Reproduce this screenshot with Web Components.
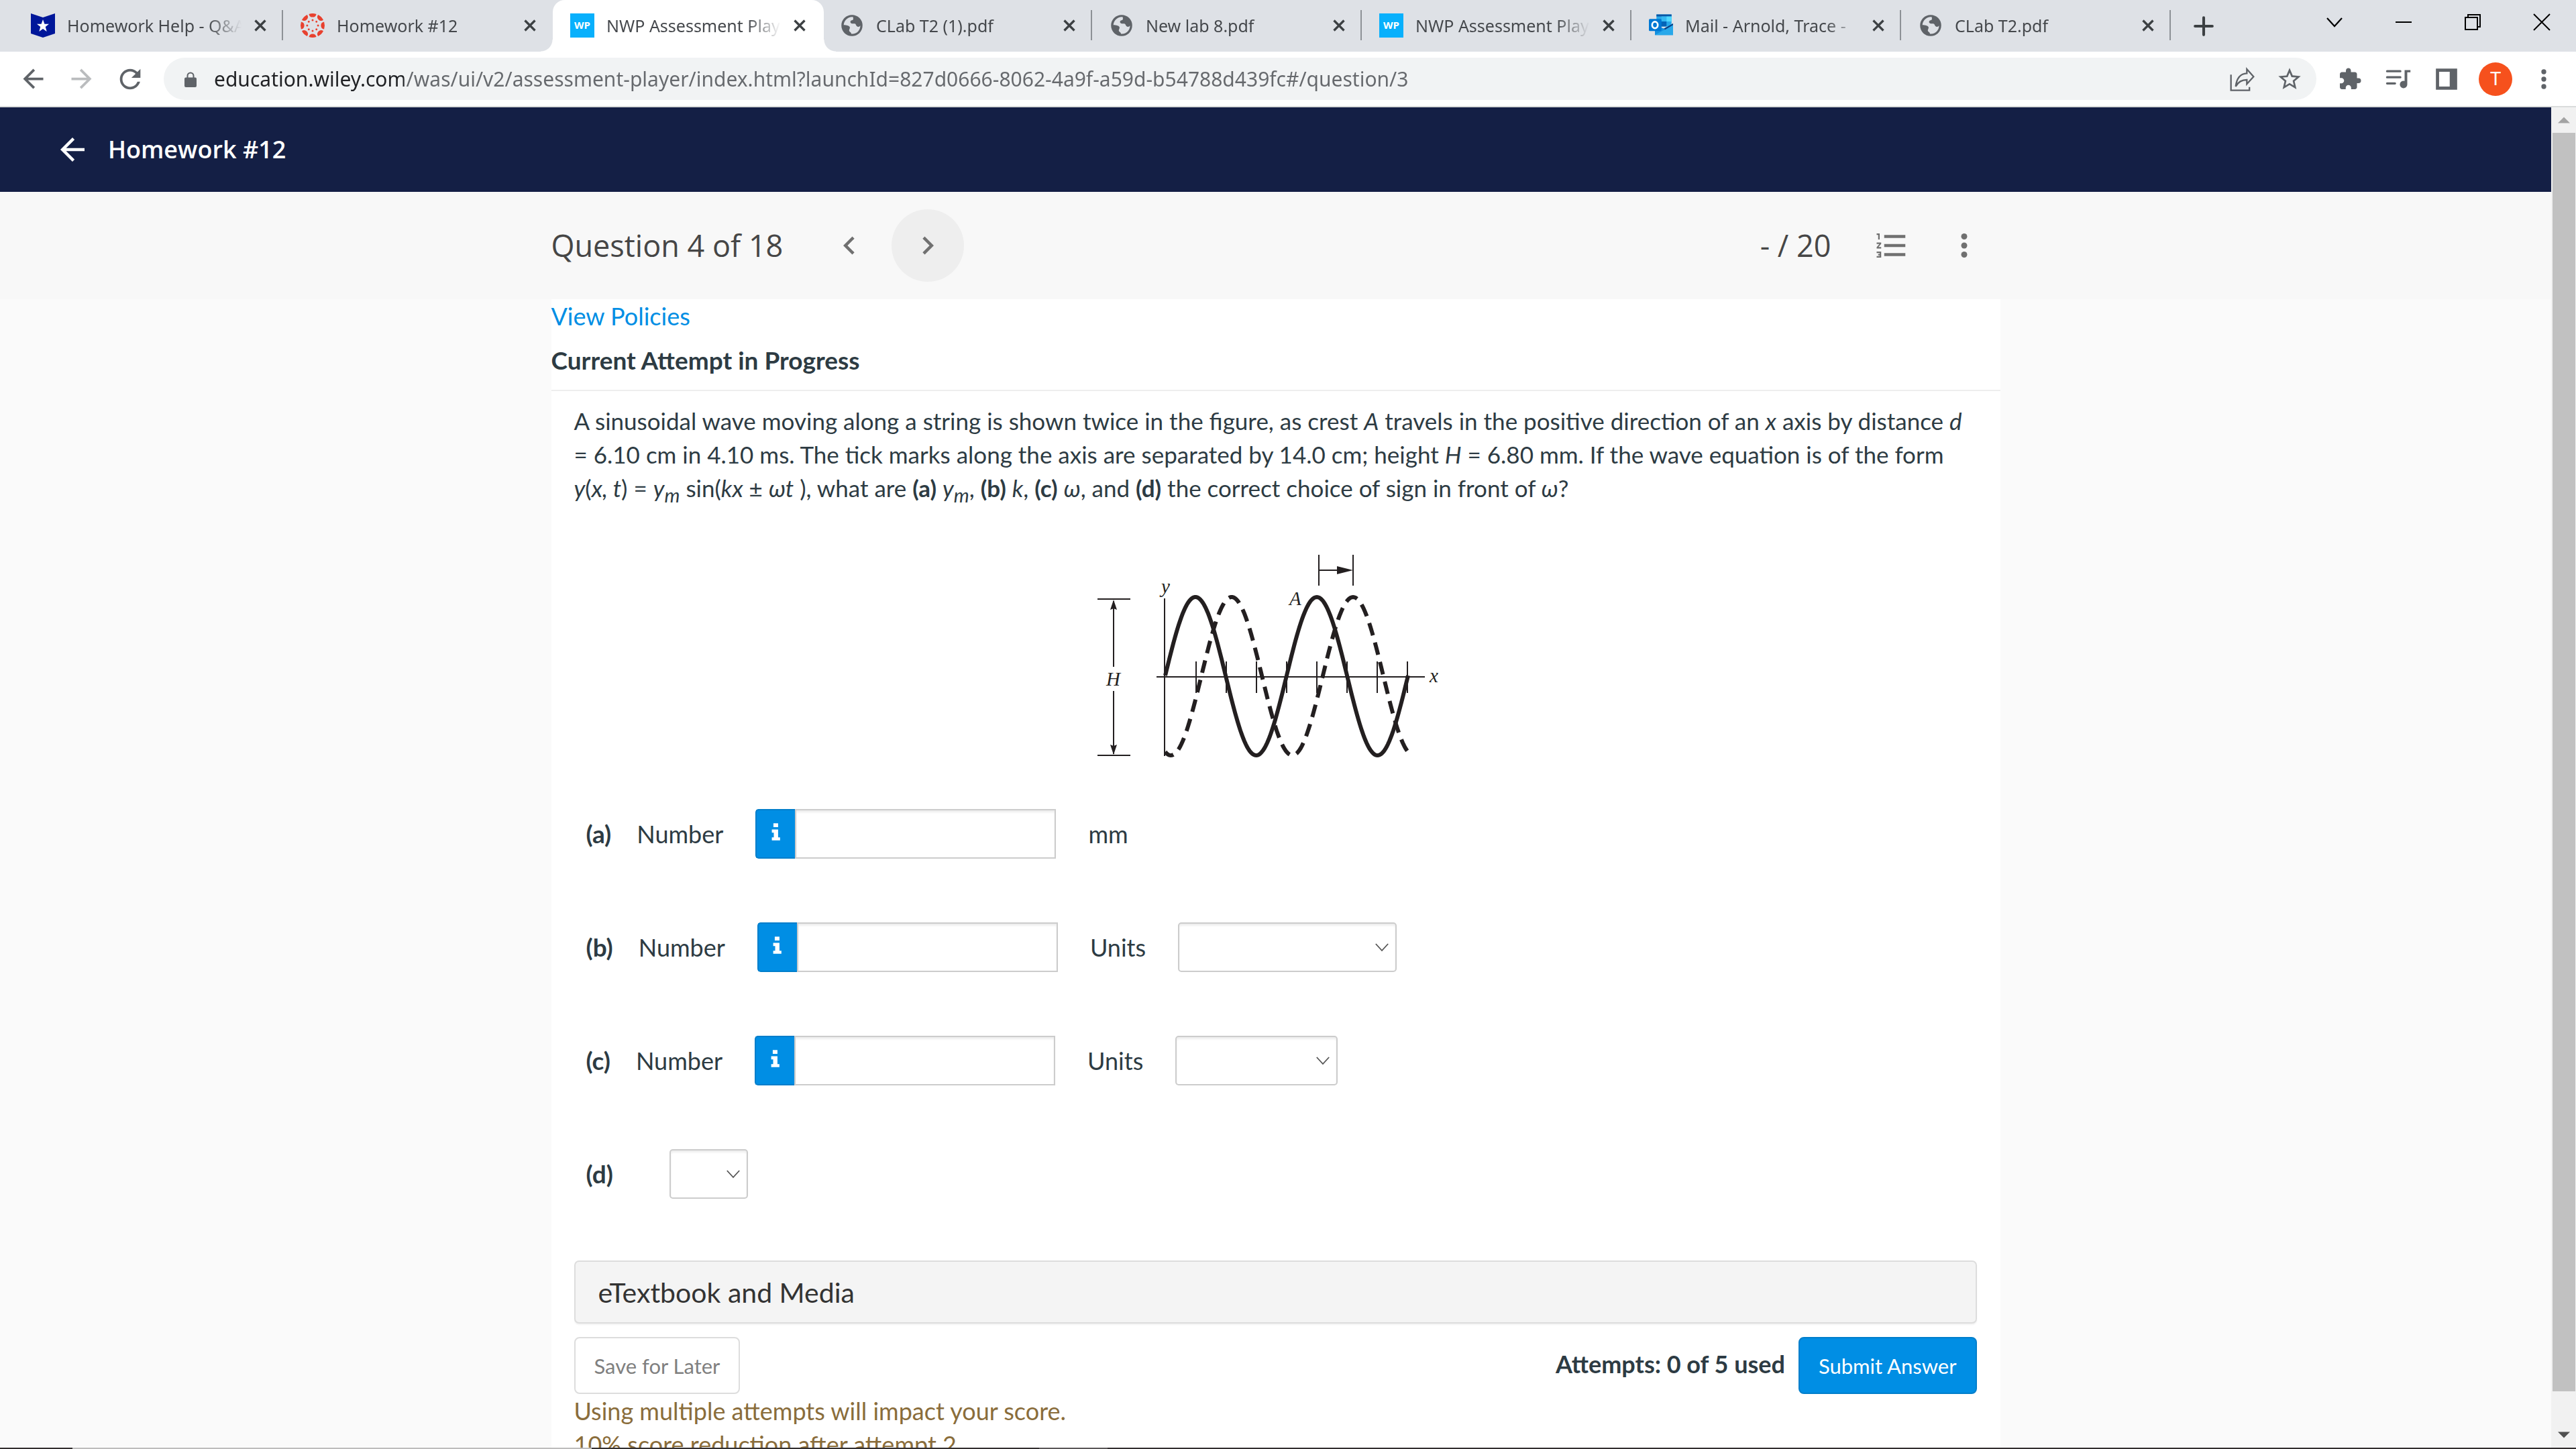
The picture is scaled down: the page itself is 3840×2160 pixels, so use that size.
<!DOCTYPE html>
<html lang="en">
<head>
  <meta charset="utf-8">
  <title>NWP Assessment Player</title>
  <style>
    * {
      box-sizing: border-box;
    }

    body {
      display: flex;
      flex-direction: column;
      height: 100vh;
      margin: 0;
      overflow: hidden;
      background: #fafafa;
      color: #2d3b43;
      font-family: Lato, "Liberation Sans", sans-serif;
      font-size: 36px;
      line-height: 50px;
    }

    .viewport {
      display: flex;
      flex: 1;
      min-height: 0;
    }

    .page {
      flex: 1;
      min-width: 0;
      overflow: hidden;
    }

    sub {
      line-height: 0;
    }
  </style>
</head>
<body>
  <tab-strip>
    <browser-tab icon="shield" divider>Homework Help - Q&amp;A</browser-tab>
    <browser-tab icon="canvas">Homework #12</browser-tab>
    <browser-tab icon="wp" active>NWP Assessment Player</browser-tab>
    <browser-tab icon="globe" divider>CLab T2 (1).pdf</browser-tab>
    <browser-tab icon="globe" divider>New lab 8.pdf</browser-tab>
    <browser-tab icon="wp" divider>NWP Assessment Player</browser-tab>
    <browser-tab icon="outlook" divider>Mail - Arnold, Trace -</browser-tab>
    <browser-tab icon="globe" divider>CLab T2.pdf</browser-tab>
  </tab-strip>
  <browser-toolbar></browser-toolbar>

  <div class="viewport">
    <div class="page">
      <app-header>Homework #12</app-header>
      <question-nav score="- / 20">Question 4 of 18</question-nav>
      <question-sheet>
        <span slot="status">Current Attempt in Progress</span>
        <span slot="question">A sinusoidal wave moving along a string is shown twice in the figure, as crest <i>A</i> travels in the positive direction of an <i>x</i> axis by distance <i>d</i><br>= 6.10 cm in 4.10 ms. The tick marks along the axis are separated by 14.0 cm; height <i>H</i> = 6.80 mm. If the wave equation is of the form<br><i>y</i>(<i>x, t</i>) = <i>y<sub>m</sub></i> sin(<i>kx</i> ± <i>ωt</i> ), what are <b>(a)</b> <i>y<sub>m</sub></i>, <b>(b)</b> <i>k</i>, <b>(c)</b> <i>ω</i>, and <b>(d)</b> the correct choice of sign in front of <i>ω</i>?</span>
        <wave-figure slot="figure"></wave-figure>
        <answer-row slot="answers" letter="(a)" number>mm</answer-row>
        <answer-row slot="answers" letter="(b)" number select="wide">Units</answer-row>
        <answer-row slot="answers" letter="(c)" number select="medium">Units</answer-row>
        <answer-row slot="answers" letter="(d)" select="narrow"></answer-row>
        <submit-bar slot="footer" attempts="Attempts: 0 of 5 used">
          Using multiple attempts will impact your score.<br>10% score reduction after attempt 2
        </submit-bar>
      </question-sheet>
    </div>
    <page-scrollbar></page-scrollbar>
  </div>
  <task-bar></task-bar>

  <script>
    const ICONS = {
      back: '<path d="M20 11H7.83l5.59-5.59L12 4l-8 8 8 8 1.41-1.41L7.83 13H20z"/>',
      forward: '<path d="M4 11h12.17l-5.59-5.59L12 4l8 8-8 8-1.41-1.41L16.17 13H4z"/>',
      reload: '<path d="M17.65 6.35C16.2 4.9 14.21 4 12 4c-4.42 0-7.99 3.58-7.99 8s3.57 8 7.99 8c3.73 0 6.84-2.55 7.73-6h-2.08c-.82 2.33-3.04 4-5.65 4-3.31 0-6-2.69-6-6s2.69-6 6-6c1.66 0 3.14.69 4.22 1.78L13 11h7V4z"/>',
      lock: '<path d="M5 9.5h1.5V7a5.5 5.5 0 0 1 11 0v2.5H19a2 2 0 0 1 2 2V22a2 2 0 0 1-2 2H5a2 2 0 0 1-2-2V11.5a2 2 0 0 1 2-2zM8.5 9.5h7V7a3.5 3.5 0 0 0-7 0z" fill-rule="evenodd"/>',
      share: '<path d="M2.8 8v14h16.5v-3M7 18.5c1-8 5-11.5 10-11.7V3l6 6.8-6 6.5v-3.7c-4.5 0-7.5 1.5-10 5.9z" fill="none" stroke="currentColor" stroke-width="1.4"/>',
      star: '<path d="M22 9.24l-7.19-.62L12 2 9.19 8.63 2 9.24l5.46 4.73L5.82 21 12 17.27 18.18 21l-1.63-7.03zM12 15.4l-3.76 2.27 1-4.28-3.32-2.88 4.38-.38L12 6.1l1.71 4.04 4.38.38-3.32 2.88 1 4.28z"/>',
      puzzle: '<path d="M20.5 11H19V7c0-1.1-.9-2-2-2h-4V3.5C13 2.12 11.88 1 10.5 1S8 2.12 8 3.5V5H4c-1.1 0-1.99.9-1.99 2v3.8H3.5c1.49 0 2.7 1.21 2.7 2.7s-1.21 2.7-2.7 2.7H2V20c0 1.1.9 2 2 2h3.8v-1.5c0-1.49 1.21-2.7 2.7-2.7s2.7 1.21 2.7 2.7V22H17c1.1 0 2-.9 2-2v-4h1.5a2.5 2.5 0 0 0 0-5z"/>',
      queue: '<path d="M1.5 4.5H14M1.5 10.2H14M1.5 16H9" stroke="currentColor" stroke-width="2" stroke-linecap="round"/><path d="M18 3.4h5.5v2.2h-3V17a3.5 3.5 0 1 1-2.5-3.3z"/>',
      panel: '<path d="M2 2h20v20H2zM5 5v14h10V5z" fill-rule="evenodd"/>',
      more: '<circle cx="12" cy="6" r="2"/><circle cx="12" cy="12" r="2"/><circle cx="12" cy="18" r="2"/>',
      prev: '<path d="M15.41 7.41L14 6l-6 6 6 6 1.41-1.41L10.83 12z"/>',
      next: '<path d="M10 6L8.59 7.41 13.17 12l-4.58 4.59L10 18l6-6z"/>',
      list: '<path d="M2 17h2v.5H3v1h1v.5H2v1h3v-4H2zm1-9h1V4H2v1h1zm-1 3h1.8L2 13.1v.9h3v-1H3.2L5 10.9V10H2zm5-6v2h14V5zm0 14h14v-2H7zm0-6h14v-2H7z"/>',
      close: '<path d="M3 3l18 18M21 3L3 21" stroke="currentColor" stroke-width="4"/>',
      plus: '<path d="M12 1v22M1 12h22" stroke="currentColor" stroke-width="3.5" stroke-linecap="round"/>',
      down: '<path d="M1 6l11 12L23 6" fill="none" stroke="currentColor" stroke-width="2.2"/>',
      minimize: '<path d="M0 12h24" stroke="currentColor" stroke-width="2"/>',
      restore: '<path d="M1 5h18v18H1zM5 5V1h18v18h-4" fill="none" stroke="currentColor" stroke-width="2"/>',
      exit: '<path d="M0 0l24 24M24 0L0 24" stroke="currentColor" stroke-width="2"/>',
      info: '<path d="M8.5 1h6v5h-6zM6.5 9h8v10H17v4H6.5v-4H9v-6H6.5z"/>',
      up: '<path d="M12 6l12 12H0z"/>',
      drop: '<path d="M0 6h24L12 18z"/>',
      shield: '<path d="M0 0l12 4 12-4v20l-12 4-12-4z" fill="#00179a"/><path d="M12 6l1.600 4.500h4.400l-3.500 2.900 1.300 4.600-3.800-2.700-3.800 2.700 1.300-4.600L6 10.500h4.400z" fill="#fff"/>',
      globe: '<circle cx="12" cy="12" r="10.5" fill="#5f6368"/><path d="M13 3.500c-5-.5-9 3.500-9.200 8 3 .2 5.200.5 6 2 .6 1.500-1 2.500-.5 4 .5 1.200 2 1 2 2.800 5 .8 9.200-3.600 9-8.300-1.500 2.500-4 1-4.500-1-.4-1.600-3.300-.3-4.800-1.400-1.200-1-.4-2.600.9-2.800 1.600-.2 1.600-1.300 1.100-3.300z" fill="#dee1e6"/>',
      outlook: '<path d="M7.5 1h15v12h-15z" fill="#28a8ea"/><path d="M7.5 1h15v2h-15z" fill="#0a56a5"/><path d="M12.5 3h5v5h-5z" fill="#35b8f1"/><path d="M17.5 3h5v5h-5z" fill="#50d9ff"/><path d="M12 8h5.500v5H12z" fill="#0364b8"/><path d="M6 12l9 3 9-5v11.500H6z" fill="#1490df"/><path d="M6 21.500l18-10v10z" fill="#28a8ea"/><path d="M15 15l9-5v1.500l-8 4.600z" fill="#0a3f83"/><rect y="5.500" width="12.500" height="12" rx="1" fill="#0078d4"/><ellipse cx="6" cy="11.500" rx="2.800" ry="3.200" fill="none" stroke="#fff" stroke-width="1.800"/>',
      wp: '<path d="M0 0h24v24H0z" fill="#08b0fc"/><text x="12" y="15.500" font-family="Open Sans, Noto Sans, sans-serif" font-weight="700" font-size="10" text-anchor="middle" fill="#fff">WP</text>',
      canvas: Array.from({ length: 8 }, (_, i) => `<g transform="rotate(${i * 45} 12 12)"><path d="M8.300.6a12 12 0 0 1 7.400 0a3.750 3.750 0 0 1-7.400 0z" fill="#e8412f"/><circle cx="12" cy="6.600" r="1" fill="#e8412f"/></g>`).join('')
    };

    // Attaches an open shadow root and fills it with styles and markup.
    function paint(element, css, html) {
      const root = element.shadowRoot || element.attachShadow({ mode: 'open' });
      root.innerHTML = `<style>* { box-sizing: border-box; } ${css}</style>${html}`;
      return root;
    }

    class AppIcon extends HTMLElement {
      connectedCallback() {
        const size = this.getAttribute('size') || 36;
        paint(this, `
          :host {
            display: inline-flex;
            flex: none;
          }
          svg {
            display: block;
            fill: currentColor;
            overflow: visible;
          }
        `, `<svg viewBox="0 0 24 24" width="${size}" height="${size}" aria-hidden="true">${ICONS[this.getAttribute('name')]}</svg>`);
      }
    }

    class IconButton extends HTMLElement {
      connectedCallback() {
        paint(this, `
          :host {
            display: inline-flex;
            flex: none;
            color: #5f6368;
          }
          button {
            display: flex;
            align-items: center;
            justify-content: center;
            width: var(--button-width, 63px);
            height: var(--button-height, 63px);
            padding: 0;
            border: 0;
            border-radius: var(--button-radius, 50%);
            background: var(--button-fill, transparent);
            color: inherit;
          }
        `, `<button type="button" aria-label="${this.getAttribute('label')}">
          <app-icon name="${this.getAttribute('icon')}" size="${this.getAttribute('size') || 36}"></app-icon>
        </button>`);
      }
    }

    class BrowserTab extends HTMLElement {
      connectedCallback() {
        paint(this, `
          :host {
            display: flex;
            align-items: center;
            position: relative;
            flex: 0 1 402px;
            min-width: 0;
            height: 77px;
            padding: 0 22px 2px 28px;
            color: #45484c;
          }
          :host([active])::before {
            content: "";
            position: absolute;
            inset: 0 -4px 0 2px;
            border-radius: 18px 18px 0 0;
            background: #fff;
          }
          :host([active])::after {
            content: "";
            position: absolute;
            inset: auto -22px 0 -16px;
            height: 18px;
            background:
              radial-gradient(circle at 0 0, transparent 17px, #fff 18px) left / 18px 18px no-repeat,
              radial-gradient(circle at 100% 0, transparent 17px, #fff 18px) right / 18px 18px no-repeat;
          }
          app-icon, span, button {
            position: relative;
          }
          span {
            flex: 1;
            min-width: 0;
            margin: 0 16px 0 18px;
            overflow: hidden;
            white-space: nowrap;
            -webkit-mask-image: linear-gradient(90deg, #000 210px, transparent 260px);
            mask-image: linear-gradient(90deg, #000 210px, transparent 260px);
          }
          button {
            display: flex;
            padding: 0;
            border: 0;
            background: none;
            color: #3c4043;
          }
          i {
            position: absolute;
            right: -2px;
            width: 2px;
            height: 45px;
            background: #8d9196;
          }
        `, `
          <app-icon name="${this.getAttribute('icon')}" size="36"></app-icon>
          <span><slot></slot></span>
          <button type="button" aria-label="Close tab"><app-icon name="close" size="20"></app-icon></button>
          ${this.hasAttribute('divider') ? '<i></i>' : ''}
        `);
      }
    }

    class TabStrip extends HTMLElement {
      connectedCallback() {
        paint(this, `
          :host {
            display: flex;
            flex: none;
            height: 77px;
            padding-left: 18px;
            background: #dee1e6;
            font: 25px/36px "Noto Sans", "Open Sans", sans-serif;
          }
          .tabs {
            display: flex;
            align-items: center;
            flex: 1;
            min-width: 0;
          }
          .add {
            margin-left: 19px;
            color: #3c4043;
          }
          .window {
            display: flex;
            --button-width: 103px;
            --button-height: 65px;
            --button-radius: 0;
          }
          .window icon-button {
            color: #000;
          }
        `, `
          <div class="tabs">
            <slot></slot>
            <icon-button class="add" icon="plus" size="28" label="New tab"></icon-button>
          </div>
          <div class="window">
            <icon-button icon="down" size="24" label="Search tabs"></icon-button>
            <icon-button icon="minimize" size="24" label="Minimize"></icon-button>
            <icon-button icon="restore" size="24" label="Restore"></icon-button>
            <icon-button icon="exit" size="24" label="Close"></icon-button>
          </div>
        `);
      }
    }

    class BrowserToolbar extends HTMLElement {
      connectedCallback() {
        paint(this, `
          :host {
            display: flex;
            flex: none;
            align-items: center;
            gap: 9px;
            height: 83px;
            padding: 0 17px 0 18px;
            border-bottom: 2px solid #dadcdc;
            background: #fff;
          }
          .muted {
            color: #babcbe;
          }
          .omnibox {
            display: flex;
            flex: 1;
            align-items: center;
            gap: 9px;
            height: 63px;
            margin: 0 9px 0 10px;
            padding: 0 9px 0 28px;
            border-radius: 32px;
            background: #f1f3f4;
            color: #5f6368;
          }
          /* The host part of the address is darker than its path. */
          .omnibox input {
            flex: 1;
            min-width: 0;
            height: 45px;
            margin-left: 14px;
            padding: 0;
            border: 0;
            outline: 0;
            background: linear-gradient(90deg, #202124 283px, #66696d 283px);
            -webkit-background-clip: text;
            background-clip: text;
            -webkit-text-fill-color: transparent;
            font: 30px/45px "Noto Sans", "Open Sans", sans-serif;
          }
          .avatar {
            width: 50px;
            height: 50px;
            margin: 0 6px 0 8px;
            padding: 0;
            border: 0;
            border-radius: 50%;
            background: #f6511d;
            color: #fff;
            font: 28px/50px Roboto, sans-serif;
          }
        `, `
          <icon-button icon="back" size="45" label="Back"></icon-button>
          <icon-button class="muted" icon="forward" size="45" label="Forward"></icon-button>
          <icon-button icon="reload" size="46" label="Reload"></icon-button>
          <div class="omnibox">
            <app-icon name="lock" size="24"></app-icon>
            <input type="text" aria-label="Address" value="education.wiley.com/was/ui/v2/assessment-player/index.html?launchId=827d0666-8062-4a9f-a59d-b54788d439fc#/question/3">
            <icon-button icon="share" size="40" label="Share"></icon-button>
            <icon-button icon="star" size="40" label="Bookmark"></icon-button>
          </div>
          <icon-button icon="puzzle" size="36" label="Extensions"></icon-button>
          <icon-button icon="queue" size="38" label="Media"></icon-button>
          <icon-button icon="panel" size="38" label="Side panel"></icon-button>
          <button type="button" class="avatar">T</button>
          <icon-button icon="more" size="44" label="Menu"></icon-button>
        `);
      }
    }

    class AppHeader extends HTMLElement {
      connectedCallback() {
        paint(this, `
          :host {
            display: block;
          }
          header {
            display: flex;
            align-items: center;
            gap: 26px;
            height: 126px;
            padding-left: 81px;
            background: #141f45;
            color: #fff;
          }
          icon-button {
            --button-width: 54px;
            --button-height: 54px;
            color: #fff;
          }
          h1 {
            margin: 0;
            font: 600 36px/50px "Open Sans", "Noto Sans", sans-serif;
          }
        `, `<header>
          <icon-button icon="back" size="54" label="Back to assignment"></icon-button>
          <h1><slot></slot></h1>
        </header>`);
      }
    }

    class QuestionNav extends HTMLElement {
      connectedCallback() {
        paint(this, `
          :host {
            display: block;
            background: #f8f8f8;
          }
          nav {
            display: flex;
            align-items: center;
            max-width: 2160px;
            height: 160px;
            margin: 0 auto;
            color: #464646;
            font: 45px/60px "Open Sans", "Noto Sans", sans-serif;
            --button-width: 108px;
            --button-height: 108px;
          }
          h2 {
            margin: 0 45px 0 0;
            font: inherit;
          }
          icon-button {
            color: #707070;
          }
          .next {
            margin: 0 auto 0 9px;
            --button-fill: #eee;
          }
          .score {
            margin-right: 36px;
          }
        `, `<nav>
          <h2><slot></slot></h2>
          <icon-button icon="prev" size="54" label="Previous question"></icon-button>
          <icon-button class="next" icon="next" size="54" label="Next question"></icon-button>
          <span class="score">${this.getAttribute('score')}</span>
          <icon-button icon="list" size="54" label="Question list"></icon-button>
          <icon-button icon="more" size="54" label="More options"></icon-button>
        </nav>`);
      }
    }

    class QuestionSheet extends HTMLElement {
      connectedCallback() {
        paint(this, `
          :host {
            display: block;
            max-width: 2160px;
            min-height: 100%;
            margin: 0 auto;
            background: #fff;
          }
          a {
            display: block;
            width: fit-content;
            color: #008ee4;
            text-decoration: none;
          }
          h3 {
            margin: 16px 0 0;
            padding-bottom: 19px;
            border-bottom: 2px solid #eee;
            font-size: 37px;
          }
          .body {
            padding: 19px 35px 0 34px;
          }
          p {
            margin: 0;
            font-size: 35px;
          }
          .figure {
            display: flex;
            justify-content: center;
            margin: 68px 0 66px;
          }
          .answers {
            display: grid;
            gap: 95px;
            margin-bottom: 92px;
            padding-left: 18px;
          }
        `, `
          <a href="#policies">View Policies</a>
          <h3><slot name="status"></slot></h3>
          <div class="body">
            <p><slot name="question"></slot></p>
            <div class="figure"><slot name="figure"></slot></div>
            <div class="answers"><slot name="answers"></slot></div>
            <slot name="footer"></slot>
          </div>
        `);
      }
    }

    class WaveFigure extends HTMLElement {
      // Sine curve from the y axis to the last tick, peak at the given x.
      curve(peak) {
        let d = '';
        for (let x = 137; x <= 499; x += 2) {
          const y = 208 - 118 * Math.cos((x - peak) * 2 * Math.PI / 181);
          d += `${d ? 'L' : 'M'}${x} ${y.toFixed(1)}`;
        }
        return d;
      }

      connectedCallback() {
        const ticks = [183, 228, 273, 318, 363, 408, 453, 498].map((x) => `M${x} 186V233`).join('');
        paint(this, `
          :host {
            display: block;
          }
          svg {
            display: block;
          }
          path {
            fill: none;
            stroke: #231f20;
            stroke-width: 2;
          }
          .wave {
            stroke-width: 6;
          }
          .dashed {
            stroke-dasharray: 19 11;
            stroke-dashoffset: 5;
          }
          .head {
            fill: #231f20;
            stroke: none;
          }
          text {
            fill: #231f20;
            font: italic 29px "Liberation Serif", serif;
          }
        `, `
          <svg viewBox="36 20 530 320" width="530" height="320" role="img" aria-label="Two sinusoidal waves along the x axis">
            <path d="M36 93H85M36 326H85M60 96V194M60 230V324"/>
            <path class="head" d="M60 94l5 15-5-2-5 2zM60 325l5-15-5 2-5-2z"/>
            <path d="M136 92V327M124 209H524${ticks}"/>
            <path d="M366 27V73M417 27V73M366 50H400"/>
            <path class="head" d="M393 44l24 6-24 6z"/>
            <path class="wave" d="${this.curve(182)}"/>
            <path class="wave dashed" d="${this.curve(236)}"/>
            <text x="49" y="222">H</text>
            <text x="131" y="84">y</text>
            <text x="322" y="102">A</text>
            <text x="531" y="217">x</text>
          </svg>
        `);
      }
    }

    class AnswerRow extends HTMLElement {
      connectedCallback() {
        const hasNumber = this.hasAttribute('number');
        const select = this.getAttribute('select');
        const letter = this.getAttribute('letter');
        paint(this, `
          :host {
            display: flex;
            align-items: center;
            gap: 48px;
            height: 74px;
          }
          b {
            font-size: 37px;
          }
          .lead {
            display: flex;
            gap: 38px;
          }
          .only {
            padding-right: 36px;
          }
          .field {
            display: flex;
            width: 448px;
            height: 74px;
          }
          .field button {
            display: flex;
            align-items: center;
            justify-content: center;
            width: 59px;
            padding: 0 0 6px;
            border: 2px solid #007ecb;
            border-right: 0;
            border-radius: 5px 0 0 5px;
            background: #008ee4;
            color: #fff;
          }
          input, select {
            margin: 0;
            border: 2px solid #ccc;
            outline: 0;
            background: #fff;
            box-shadow: inset 0 3px 3px rgba(0, 0, 0, 0.07);
            font: inherit;
          }
          input {
            flex: 1;
            min-width: 0;
            border-radius: 0;
          }
          .pick {
            display: grid;
            align-items: center;
          }
          .pick > * {
            grid-area: 1 / 1;
          }
          .pick app-icon {
            justify-self: end;
            margin-right: 12px;
            color: #555;
            pointer-events: none;
          }
          select {
            height: 74px;
            border-radius: 5px;
            appearance: none;
          }
          .wide {
            width: 326px;
          }
          .medium {
            width: 242px;
          }
          .narrow {
            width: 117px;
          }
        `, `
          ${hasNumber ? `
            <div class="lead"><b>${letter}</b><label for="number">Number</label></div>
            <div class="field">
              <button type="button" aria-label="Info"><app-icon name="info" size="28"></app-icon></button>
              <input id="number" type="text">
            </div>
            ${select ? '<label for="pick"><slot></slot></label>' : '<span><slot></slot></span>'}
          ` : `<label class="only" for="pick"><b>${letter}</b></label>`}
          ${select ? `
            <div class="pick">
              <select id="pick" class="${select}"><option></option></select>
              <app-icon name="down" size="20"></app-icon>
            </div>
          ` : ''}
        `);
      }
    }

    class SubmitBar extends HTMLElement {
      connectedCallback() {
        paint(this, `
          :host {
            display: block;
          }
          button {
            display: block;
            margin: 0;
            font-family: inherit;
          }
          .media {
            width: 100%;
            height: 94px;
            padding: 0 34px;
            border: 2px solid #ddd;
            border-radius: 7px;
            background: #f4f4f4;
            box-shadow: 0 2px 2px rgba(0, 0, 0, 0.05);
            color: #333;
            font-size: 41px;
            text-align: left;
          }
          .row {
            display: flex;
            align-items: center;
            gap: 20px;
            margin-top: 20px;
          }
          .row button {
            height: 85px;
            padding: 0 28px;
            border: 2px solid #ddd;
            border-radius: 8px;
            background: #fff;
            color: #808080;
            font-size: 31px;
          }
          .row .submit {
            border-color: #007ecb;
            background: #008ee4;
            color: #fff;
          }
          strong {
            margin-left: auto;
            padding-bottom: 6px;
          }
          p {
            margin: 0;
            color: #8a6d3b;
          }
        `, `
          <button type="button" class="media">eTextbook and Media</button>
          <div class="row">
            <button type="button">Save for Later</button>
            <strong>${this.getAttribute('attempts')}</strong>
            <button type="submit" class="submit">Submit Answer</button>
          </div>
          <p><slot></slot></p>
        `);
      }
    }

    class PageScrollbar extends HTMLElement {
      connectedCallback() {
        paint(this, `
          :host {
            display: flex;
            flex: none;
            flex-direction: column;
            width: 37px;
            background: #f1f1f1;
            --button-width: 37px;
            --button-height: 38px;
            --button-radius: 0;
          }
          .up {
            color: #a3a3a3;
          }
          .down {
            color: #505050;
          }
          .track {
            display: flex;
            flex: 1;
            padding: 0 1px 46px 2px;
          }
          .thumb {
            flex: 1;
            background: #c1c1c1;
          }
        `, `
          <icon-button class="up" icon="up" size="18" label="Scroll up"></icon-button>
          <div class="track"><div class="thumb"></div></div>
          <icon-button class="down" icon="drop" size="18" label="Scroll down"></icon-button>
        `);
      }
    }

    class TaskBar extends HTMLElement {
      connectedCallback() {
        paint(this, `
          :host {
            display: flex;
            flex: none;
            height: 2px;
            background: #322e2f;
          }
          .search {
            width: 774px;
            margin-left: 108px;
            background: #bdbcbc;
          }
          .app {
            width: 102px;
            margin-left: 667px;
            background: #5a5758;
          }
        `, '<div class="search"></div><div class="app"></div>');
      }
    }

    customElements.define('app-icon', AppIcon);
    customElements.define('icon-button', IconButton);
    customElements.define('browser-tab', BrowserTab);
    customElements.define('tab-strip', TabStrip);
    customElements.define('browser-toolbar', BrowserToolbar);
    customElements.define('app-header', AppHeader);
    customElements.define('question-nav', QuestionNav);
    customElements.define('question-sheet', QuestionSheet);
    customElements.define('wave-figure', WaveFigure);
    customElements.define('answer-row', AnswerRow);
    customElements.define('submit-bar', SubmitBar);
    customElements.define('page-scrollbar', PageScrollbar);
    customElements.define('task-bar', TaskBar);
  </script>
</body>
</html>
